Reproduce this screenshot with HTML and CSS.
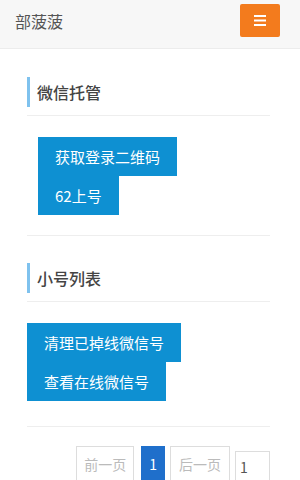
FILE: index.html
```html
<!DOCTYPE html>
<html lang="zh-CN">
<head>
<meta charset="utf-8">
<title>部菠菠</title>
<link rel="stylesheet" href="styles.css">
</head>
<body>
<header class="topbar">
  <span class="brand">部菠菠</span>
  <button class="menu-btn" type="button" aria-label="菜单">
    <svg width="12" height="11" viewBox="0 0 12 11"><rect x="0" y="0" width="12" height="2" fill="#fff"/><rect x="0" y="4.5" width="12" height="2" fill="#fff"/><rect x="0" y="9" width="12" height="2" fill="#fff"/></svg>
  </button>
</header>
<main class="content">
  <section class="panel">
    <div class="panel-head"><h2 class="panel-title">微信托管</h2></div>
    <div class="actions indent">
      <button class="btn" type="button">获取登录二维码</button>
      <button class="btn" type="button">62上号</button>
    </div>
  </section>
  <hr class="divider">
  <section class="panel">
    <div class="panel-head"><h2 class="panel-title">小号列表</h2></div>
    <div class="actions">
      <button class="btn" type="button">清理已掉线微信号</button>
      <button class="btn" type="button">查看在线微信号</button>
    </div>
  </section>
  <hr class="divider divider-bottom">
  <nav class="pager">
    <span class="page-btn disabled">前一页</span>
    <span class="page-btn active">1</span>
    <span class="page-btn disabled wide">后一页</span>
    <input class="page-input" type="text" value="1">
  </nav>
</main>
</body>
</html>
```
FILE: styles.css
```css
* { box-sizing: border-box; }
html, body { margin: 0; padding: 0; background: #fff; }
body {
  font-family: "Noto Sans CJK SC", "Noto Sans", sans-serif;
  color: #333;
  width: 300px;
  overflow: hidden;
}
.topbar {
  height: 49px;
  background: #f7f7f7;
  border-bottom: 1px solid #ececec;
  display: flex;
  justify-content: space-between;
  align-items: flex-start;
  padding: 0 20px 0 15px;
}
.brand {
  font-size: 16px;
  line-height: 42px;
  color: #555;
}
.menu-btn {
  margin-top: 4px;
  width: 40px;
  height: 33px;
  background: #f37b1d;
  border: 0;
  border-radius: 2px;
  display: flex;
  align-items: center;
  justify-content: center;
  padding: 0;
}
.content {
  padding: 0 30px 0 27px;
}
.panel-head {
  margin-top: 28px;
  padding-bottom: 8px;
  border-bottom: 1px solid #eee;
}
.panel + .divider + .panel .panel-head { margin-top: 27px; }
.panel-title {
  margin: 0;
  height: 30px;
  line-height: 30px;
  border-left: 3px solid #7fc2ee;
  padding-left: 7px;
  font-size: 16px;
  font-weight: 500;
  color: #444;
}
.actions {
  margin-top: 21px;
  display: flex;
  flex-direction: column;
  align-items: flex-start;
}
.actions.indent { padding-left: 11px; }
.btn {
  font-family: inherit;
  font-size: 15px;
  line-height: 19px;
  padding: 9px 16px;
  background: #0e90d2;
  color: #fff;
  border: 1px solid #0e90d2;
  border-radius: 0;
  cursor: pointer;
}
.divider {
  margin: 20px 0 0;
  border: 0;
  border-top: 1px solid #eee;
  height: 0;
}
.divider-bottom { margin-top: 25px; }
.pager {
  margin-top: 19px;
  display: flex;
  justify-content: flex-end;
  align-items: flex-start;
  gap: 5px;
}
.page-btn {
  height: 36px;
  line-height: 34px;
  font-size: 14px;
  padding: 0 7px;
  border: 1px solid #ddd;
  color: #bbb;
  background: #fff;
}
.page-btn.wide { padding: 0 8px; }
.page-btn.disabled:first-child { margin-right: 2px; }
.page-btn.active {
  background: #1f6fcb;
  border-color: #1f6fcb;
  color: #fff;
  padding: 0 7px;
}
.page-input {
  margin-top: 5px;
  width: 35px;
  height: 32px;
  border: 1px solid #ddd;
  font-size: 14px;
  padding: 0 4px;
  color: #555;
  font-family: inherit;
}
```
